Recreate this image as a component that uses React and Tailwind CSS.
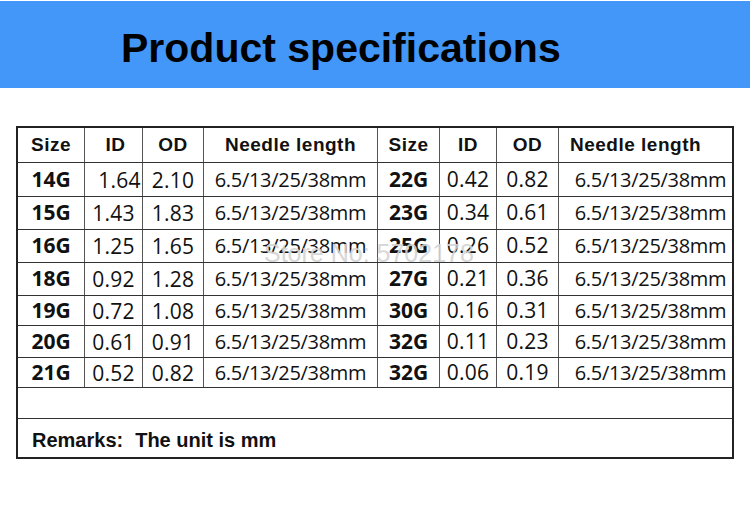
import React from "react";

const widths = ["w-[67px]", "w-[58px]", "w-[61px]", "w-[174px]", "w-[62px]", "w-[57px]", "w-[62px]", "w-[173px]"];

const rows = [
  { h: "h-[34px]", l: ["14G", "1.64", "2.10"], r: ["22G", "0.42", "0.82"], idPad: "pl-[12px]" },
  { h: "h-[33px]", l: ["15G", "1.43", "1.83"], r: ["23G", "0.34", "0.61"] },
  { h: "h-[33px]", l: ["16G", "1.25", "1.65"], r: ["25G", "0.26", "0.52"] },
  { h: "h-[33px]", l: ["18G", "0.92", "1.28"], r: ["27G", "0.21", "0.36"] },
  { h: "h-[30px]", l: ["19G", "0.72", "1.08"], r: ["30G", "0.16", "0.31"] },
  { h: "h-[32px]", l: ["20G", "0.61", "0.91"], r: ["32G", "0.11", "0.23"] },
  { h: "h-[30px]", l: ["21G", "0.52", "0.82"], r: ["32G", "0.06", "0.19"] },
];

const sizeCls = "font-['Open_Sans',sans-serif] font-bold text-[21px]";
const numCls = "font-['Open_Sans',sans-serif] text-[21px] tracking-[0.3px]";
const lenCls = "font-['Open_Sans',sans-serif] text-[20px] tracking-[-0.3px]";
const headCls = "font-['Liberation_Sans',Arial,sans-serif] font-bold text-[19px] tracking-[0.5px]";

function Cell({ w, last, className = "", children }) {
  return (
    <div
      className={`${w} h-full flex items-center justify-center ${last ? "" : "border-r border-[#555]"} ${className}`}
    >
      {children}
    </div>
  );
}

export default function App() {
  return (
    <div className="w-[750px] h-[507px] bg-white text-[#111] relative overflow-hidden">
      <div className="mt-px h-[87px] bg-[#4397f9] pl-[121px] pt-[24px]">
        <h1 className="font-['Liberation_Sans',Arial,sans-serif] font-bold text-[41px] leading-[46px] text-black">
          Product specifications
        </h1>
      </div>

      <div className="mt-[38px] ml-[16px] w-[718px] border-2 border-[#222]">
        <div className={`flex h-[35px] border-b border-[#333] ${headCls}`}>
          <Cell w={widths[0]}>Size</Cell>
          <Cell w={widths[1]} className="pl-[4px]">ID</Cell>
          <Cell w={widths[2]}>OD</Cell>
          <Cell w={widths[3]}>Needle length</Cell>
          <Cell w={widths[4]}>Size</Cell>
          <Cell w={widths[5]}>ID</Cell>
          <Cell w={widths[6]}>OD</Cell>
          <Cell w={widths[7]} last className="!justify-start pl-[11px]">Needle length</Cell>
        </div>

        {rows.map((r, i) => (
          <div key={i} className={`flex ${r.h} border-b border-[#333]`}>
            <Cell w={widths[0]} className={sizeCls}>{r.l[0]}</Cell>
            <Cell w={widths[1]} className={`${numCls} pt-[2px] ${r.idPad || ""}`}>{r.l[1]}</Cell>
            <Cell w={widths[2]} className={`${numCls} pt-[2px]`}>{r.l[2]}</Cell>
            <Cell w={widths[3]} className={lenCls}>6.5/13/25/38mm</Cell>
            <Cell w={widths[4]} className={sizeCls}>{r.r[0]}</Cell>
            <Cell w={widths[5]} className={numCls}>{r.r[1]}</Cell>
            <Cell w={widths[6]} className={numCls}>{r.r[2]}</Cell>
            <Cell w={widths[7]} last className={`${lenCls} pl-[10px]`}>6.5/13/25/38mm</Cell>
          </div>
        ))}

        <div className="h-[31px] border-b border-[#333]" />

        <div className="h-[38px] flex items-center pl-[14px] pt-[4px] font-['Liberation_Sans',Arial,sans-serif] font-bold text-[20px] text-[#111]">
          <span className="mr-[12px]">Remarks:</span>
          <span>The unit is mm</span>
        </div>
      </div>

      <div className="absolute left-[264px] top-[238px] font-['Liberation_Sans',Arial,sans-serif] text-[25px] leading-[30px] text-[#d4d4d4] opacity-90 pointer-events-none">
        Store No: 5702178
      </div>
    </div>
  );
}
